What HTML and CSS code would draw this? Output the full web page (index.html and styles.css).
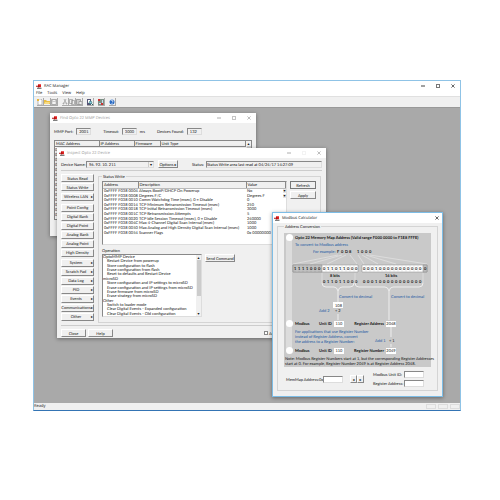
FILE: index.html
```html
<!DOCTYPE html>
<html lang="en">
<head>
    <meta charset="UTF-8">
    <meta name="viewport" content="width=device-width, initial-scale=1.0">
    <title>RAC Manager</title>
    <link rel="stylesheet" href="styles.css">
</head>
<body>
    <svg class="defs" width="0" height="0">
        <symbol id="logo" viewBox="0 0 12 9">
            <path d="M4 0h6v6H4z" fill="#e02020"/>
            <path d="M0 3h4V1l4 3-4 3V5H0z" fill="#b01010"/>
            <path d="M2 7h9v2H2z" fill="#555"/>
        </symbol>
        <symbol id="min" viewBox="0 0 5 5"><path d="M0 2.5h5" stroke="currentColor" fill="none"/></symbol>
        <symbol id="max" viewBox="0 0 5 5"><path d="M.5.5h4v4h-4z" stroke="currentColor" stroke-width=".8" fill="none"/></symbol>
        <symbol id="close" viewBox="0 0 5 5"><path d="M.5.5l4 4m0-4l-4 4" stroke="currentColor" stroke-width=".8" fill="none"/></symbol>
    </svg>

    <main class="app">
        <header class="titlebar">
            <svg class="logo"><use href="#logo"/></svg>
            <h1>RAC Manager</h1>
            <div class="controls">
                <button aria-label="Minimize"><svg><use href="#min"/></svg></button>
                <button aria-label="Maximize"><svg><use href="#max"/></svg></button>
                <button aria-label="Close"><svg><use href="#close"/></svg></button>
            </div>
        </header>
        <nav class="menu">
            <a href="#">File</a>
            <a href="#">Tools</a>
            <a href="#">View</a>
            <a href="#">Help</a>
        </nav>
        <div class="toolbar">
            <div class="tools">
                <button aria-label="New"><svg viewBox="0 0 6 6"><path d="M1 0h3l1 1v5H1z" fill="#fff" stroke="#777" stroke-width=".5"/><path d="M0 0h2v2H0z" fill="#e8b73a"/></svg></button>
                <button aria-label="Open"><svg viewBox="0 0 6 6"><path d="M0 1h2l1 1h3v3H0z" fill="#e9bd45"/><path d="M0 5l1-2h5L5 5z" fill="#f7dc84"/></svg></button>
                <button aria-label="Save"><svg viewBox="0 0 6 6"><path d="M.5.5h5v5h-5z" fill="#ccc" stroke="#888" stroke-width=".6"/><path d="M2 1h2v1H2zM1.500 3h3v2h-3z" fill="#f4f4f4"/></svg></button>
            </div>
            <div class="tools">
                <button aria-label="Cut"><svg viewBox="0 0 6 6"><path d="M2 0l2 4M4 0L2 4" stroke="#888" stroke-width=".6"/><path d="M1 4h1v1H1zM4 4h1v1H4z" fill="none" stroke="#888" stroke-width=".5"/></svg></button>
                <button aria-label="Copy"><svg viewBox="0 0 6 6"><path d="M.5.5h3v4h-3zM2.500 1.500h3v4h-3z" fill="#eee" stroke="#888" stroke-width=".6"/></svg></button>
                <button aria-label="Paste"><svg viewBox="0 0 6 6"><path d="M.5.5h4v5h-4z" fill="#ccc" stroke="#777" stroke-width=".6"/><path d="M3 2.500h3v3H3z" fill="#eee" stroke="#777" stroke-width=".5"/></svg></button>
            </div>
            <div class="tools">
                <button aria-label="Find"><svg viewBox="0 0 6 6"><path d="M0 0h4v6H0z" fill="#557"/><path d="M1 1h2v3H1z" fill="#fff"/><circle cx="3.500" cy="3.500" r="1.300" fill="#8cd0e4" stroke="#266" stroke-width=".6"/><path d="M4.500 4.500L6 6" stroke="#266"/></svg></button>
            </div>
            <div class="tools">
                <button aria-label="Inspect"><svg viewBox="0 0 6 6"><path d="M0 0h6v6H0z" fill="#7d9085"/><path d="M0 0h2v2H0zM3 4h2v2H3z" fill="#c33"/><path d="M4 1h1v3H4zM1 4h2v1H1z" fill="#cde"/></svg></button>
            </div>
            <div class="tools">
                <button aria-label="Help"><svg viewBox="0 0 6 6"><circle cx="3" cy="3" r="2.500" fill="#2b6cc4"/><path d="M2 2q0-1 1-1t1 1-1 1.300M3 4v1" stroke="#fff" stroke-width=".7" fill="none"/></svg></button>
            </div>
        </div>

        <div class="desktop">
            <section class="window find">
                <header class="titlebar inactive">
                    <svg class="logo"><use href="#logo"/></svg>
                    <h2>Find Opto 22 MMP Devices</h2>
                    <div class="controls">
                        <button aria-label="Minimize"><svg><use href="#min"/></svg></button>
                        <button aria-label="Maximize"><svg><use href="#max"/></svg></button>
                        <button aria-label="Close"><svg><use href="#close"/></svg></button>
                    </div>
                </header>
                <div class="find-fields">
                    <label>MMP Port: <input class="sunken" value="2001"></label>
                    <label>Timeout: <input class="sunken" value="3000"> <span>ms</span></label>
                    <label>Devices Found: <input class="sunken" value="132" readonly></label>
                </div>
                <div class="device-list">
                    <table>
                        <thead>
                            <tr><th class="mac">MAC Address</th><th class="ip">IP Address</th><th class="firmware">Firmware</th><th>Unit Type</th></tr>
                        </thead>
                        <tbody>
                            <tr><td>00-A0-3D-00-C0-14</td><td>10.192.55.81</td><td>R9.5a</td><td>SNAP-PAC-R1</td></tr>
                            <tr><td>00</td></tr>
                            <tr><td>00</td></tr>
                            <tr><td>00</td></tr>
                            <tr><td>00</td></tr>
                            <tr><td>00</td></tr>
                            <tr><td>00</td></tr>
                            <tr><td>00</td></tr>
                            <tr><td>00</td></tr>
                            <tr><td>00</td></tr>
                            <tr><td>00</td></tr>
                            <tr><td>00</td></tr>
                            <tr><td>00</td></tr>
                            <tr><td>00</td></tr>
                        </tbody>
                    </table>
                    <div class="scroll"><span>▴</span><i></i><span>▾</span></div>
                </div>
            </section>

            <section class="window inspect">
                <header class="titlebar inactive">
                    <svg class="logo"><use href="#logo"/></svg>
                    <h2>Inspect Opto 22 Device</h2>
                    <div class="controls">
                        <button aria-label="Minimize"><svg><use href="#min"/></svg></button>
                        <button aria-label="Maximize" disabled><svg><use href="#max"/></svg></button>
                        <button aria-label="Close"><svg><use href="#close"/></svg></button>
                    </div>
                </header>
                <div class="device-bar">
                    <label for="device">Device Name:</label>
                    <div class="combo sunken">
                        <select id="device"><option>96. 92. 10. 211</option></select>
                        <span>▾</span>
                    </div>
                    <button class="btn">Options <span>▸</span></button>
                    <label for="status" class="status-label">Status:</label>
                    <input id="status" class="sunken" value="Status Write area last read at 04/24/17 14:27:09" readonly>
                </div>
                <div class="inspect-body">
                    <div class="side">
                        <div class="side-group">
                            <button class="btn">Status Read</button>
                            <button class="btn">Status Write</button>
                        </div>
                        <div class="side-group">
                            <button class="btn more">Wireless LAN</button>
                        </div>
                        <div class="side-group">
                            <button class="btn">Point Config</button>
                            <button class="btn">Digital Bank</button>
                            <button class="btn">Digital Point</button>
                            <button class="btn">Analog Bank</button>
                            <button class="btn">Analog Point</button>
                            <button class="btn">High Density</button>
                        </div>
                        <div class="side-group">
                            <button class="btn more">System</button>
                            <button class="btn more">Scratch Pad</button>
                            <button class="btn more">Data Log</button>
                            <button class="btn more">PID</button>
                            <button class="btn more">Events</button>
                            <button class="btn more">Communications</button>
                            <button class="btn more">Other</button>
                        </div>
                    </div>
                    <fieldset class="write">
                        <legend>Status Write</legend>
                        <div class="write-row">
                            <div class="registers sunken">
                                <table>
                                    <thead>
                                        <tr><th class="address">Address</th><th class="description">Description</th><th>Value</th></tr>
                                    </thead>
                                    <tbody>
                                        <tr><td>0xFFFF F038 0004</td><td>Always BootP/DHCP On Powerup</td><td>No <span>▾</span></td></tr>
                                        <tr><td>0xFFFF F038 0008</td><td>Degrees F/C</td><td>Degrees F <span>▾</span></td></tr>
                                        <tr><td>0xFFFF F038 0010</td><td>Comm Watchdog Time (msec), 0 = Disable</td><td>0</td></tr>
                                        <tr><td>0xFFFF F038 0014</td><td>TCP Minimum Retransmission Timeout (msec)</td><td>250</td></tr>
                                        <tr><td>0xFFFF F038 0018</td><td>TCP Initial Retransmission Timeout (msec)</td><td>3000</td></tr>
                                        <tr><td>0xFFFF F038 001C</td><td>TCP Retransmission Attempts</td><td>5</td></tr>
                                        <tr><td>0xFFFF F038 0020</td><td>TCP Idle Session Timeout (msec), 0 = Disable</td><td>240000</td></tr>
                                        <tr><td>0xFFFF F038 004C</td><td>Max 4-Channel Digital Scan Interval (msec)</td><td>1000</td></tr>
                                        <tr><td>0xFFFF F038 0050</td><td>Max Analog and High Density Digital Scan Interval (msec)</td><td>1000</td></tr>
                                        <tr><td>0xFFFF F038 0054</td><td>Scanner Flags</td><td>0x 00000000</td></tr>
                                    </tbody>
                                </table>
                            </div>
                            <div class="actions">
                                <button class="btn default">Refresh</button>
                                <button class="btn">Apply</button>
                            </div>
                        </div>
                        <div class="operation">Operation</div>
                        <div class="operation-row">
                            <div class="operations sunken">
                                <ul>
                                    <li class="group">OptoMMP Device</li>
                                    <li>Restart Device from powerup</li>
                                    <li>Store configuration to flash</li>
                                    <li>Erase configuration from flash</li>
                                    <li>Reset to defaults and Restart Device</li>
                                    <li class="group">microSD</li>
                                    <li>Store configuration and IP settings to microSD</li>
                                    <li>Erase configuration and IP settings from microSD</li>
                                    <li>Erase firmware from microSD</li>
                                    <li>Erase strategy from microSD</li>
                                    <li class="group">Other</li>
                                    <li>Switch to loader mode</li>
                                    <li>Clear Digital Events - Expanded configuration</li>
                                    <li>Clear Digital Events - Old configuration</li>
                                </ul>
                                <div class="scroll"><span>▴</span><i></i><span>▾</span></div>
                            </div>
                            <button class="btn">Send Command</button>
                        </div>
                    </fieldset>
                </div>
                <footer class="inspect-footer">
                    <button class="btn">Close</button>
                    <button class="btn">Help</button>
                    <label class="auto"><input type="checkbox"> Auto Refresh</label>
                </footer>
            </section>

            <section class="window modbus">
                <header class="titlebar">
                    <svg class="logo"><use href="#logo"/></svg>
                    <h2>Modbus Calculator</h2>
                    <div class="controls">
                        <button aria-label="Close"><svg><use href="#close"/></svg></button>
                    </div>
                </header>
                <fieldset class="conversion">
                    <legend>Address Conversion</legend>
                    <div class="diagram">
                        <label class="choice map-choice">
                            <input type="radio" name="kind">
                            <span>Opto 22 Memory Map Address (Valid range F000 0000 to F1E8 FFFE)</span>
                        </label>
                        <svg class="bits" width="146" height="78" viewBox="0 0 146 78">
                            <g class="blue">
                                <text x="11" y="4">To convert to Modbus address</text>
                                <text x="29" y="11">For example:</text>
                                <text x="55" y="56">Convert to decimal</text>
                                <text x="107" y="56">Convert to decimal</text>
                                <text x="35" y="70">Add 2</text>
                            </g>
                            <text class="bold" y="11" x="53 57 61 65 73 77 81 85">F0D81000</text>
                            <path class="fan" d="M54 13L9 22M58 13L26 22M62 13L43 22M66 13L73 22M74 13L80 22M78 13L94 22M82 13L112 22M86 13L143 22"/>
                            <path d="M9 23h65v7H9zM78 23h65v7H78z" fill="#fff" stroke="#888" stroke-width=".5"/>
                            <path d="M9 23h29v7H9zM139 23h4v7h-4z" fill="#bdbdbd" stroke="#888" stroke-width=".5"/>
                            <path class="ticks" d="M13 23v7M17 23v7M21 23v7M25 23v7M29 23v7M33 23v7M42 23v7M46 23v7M50 23v7M54 23v7M58 23v7M62 23v7M66 23v7M70 23v7M82 23v7M86 23v7M90 23v7M94 23v7M98 23v7M102 23v7M106 23v7M110 23v7M114 23v7M118 23v7M122 23v7M126 23v7M130 23v7M134 23v7"/>
                            <text class="bold" y="28" x="10 14 18 22 26 30 34 39 43 47 51 55 59 63 67 71">1111000011011000</text>
                            <text class="bold" y="28" x="79 83 87 91 95 99 103 107 111 115 119 123 127 131 135 140">0001000000000000</text>
                            <text class="bold" x="46" y="35">8 bits</text>
                            <text class="bold" x="101" y="35">16 bits</text>
                            <text class="bold" y="41" x="39 43 47 51 55 59 63 67 71">011011000</text>
                            <text class="bold" y="41" x="79 83 87 91 95 99 103 107 111 115 119 123 127 131 135">000100000000000</text>
                            <g class="brace">
                                <path d="M38 41q0 4 4 4h8q3 0 4 4 1-4 4-4h8q4 0 4-4"/>
                                <path d="M71 41q0 4 4 4h26q3 0 4 4 1-4 4-4h26q4 0 4-4"/>
                                <path d="M38 31v10M71 31v10M139 31v10" stroke-width=".5"/>
                                <path d="M54 49v11M105 49v29M54 72v6"/>
                            </g>
                            <path d="M49 60h10v6H49z" fill="#fff"/>
                            <text x="51" y="65">108</text>
                            <text x="51" y="70">+ 2</text>
                        </svg>
                        <div class="choice">
                            <label class="kind"><input type="radio" name="kind"> <span>Modbus</span></label>
                            <label>Unit ID <input class="box" value="110"></label>
                            <label class="register">Register Address <input class="box" value="2048"></label>
                        </div>
                        <div class="note-row">
                            <p>For applications that use Register Number<br>instead of Register Address, convert<br>the address to a Register Number:</p>
                            <svg width="30" height="20" viewBox="0 0 30 20">
                                <path class="brace" d="M18 0v10M18 17v3"/>
                                <text class="blue" x="2" y="15">Add 1</text>
                                <text x="16" y="15">+ 1</text>
                            </svg>
                        </div>
                        <div class="choice">
                            <label class="kind"><input type="radio" name="kind"> <span>Modbus</span></label>
                            <label>Unit ID <input class="box" value="110"></label>
                            <label class="register">Register Number <input class="box" value="2049"></label>
                        </div>
                        <p class="note">Note: Modbus Register Numbers start at 1, but the corresponding Register Addresses<br>start at 0. For example, Register Number 2049 is at Register Address 2048.</p>
                    </div>
                    <div class="entry">
                        <label for="memmap">MemMap Address: <span>0x</span></label>
                        <input id="memmap" class="sunken">
                        <div class="arrows">
                            <button class="btn" aria-label="To memory map">◂</button>
                            <button class="btn" aria-label="To Modbus">▸</button>
                        </div>
                        <div class="entry-fields">
                            <label>Modbus Unit ID: <input class="sunken"></label>
                            <label>Register Address: <input class="sunken"></label>
                        </div>
                    </div>
                </fieldset>
            </section>
        </div>

        <footer class="statusbar">
            <span>Ready</span>
            <div class="panes"><i></i><i></i><i></i></div>
        </footer>
    </main>
</body>
</html>
```

FILE: styles.css
```css
* {
    box-sizing: border-box;
}

body {
    margin: 0;
    padding: 80px 39px 89px 33px;
    min-height: 100vh;
    display: flex;
    background-color: #fff;
    color: #111;
    font: 4px/5px Lato, "Liberation Sans", sans-serif;
    text-rendering: geometricPrecision;
}

h1, h2, p, ul {
    margin: 0;
    padding: 0;
    font: inherit;
}

button, input, select {
    margin: 0;
    padding: 0;
    border: 0;
    border-radius: 0;
    background: none;
    color: inherit;
    font: inherit;
    text-rendering: inherit;
    appearance: none;
}

a {
    color: inherit;
    text-decoration: none;
}

table {
    border-collapse: collapse;
    table-layout: fixed;
    width: 100%;
}

th, td {
    padding: 0 0 0 2px;
    font-weight: normal;
    text-align: left;
    white-space: nowrap;
}

label, legend, button {
    white-space: nowrap;
}

.defs {
    position: absolute;
}

.app {
    flex: 1;
    min-width: 0;
    display: flex;
    flex-direction: column;
    border: 1px solid #8fc3e6;
    border-bottom-color: #3474b4;
    background-color: #fff;
}

/* title bars */
.titlebar {
    display: flex;
    align-items: center;
    gap: 2px;
    height: 10px;
    padding: 0 5px 0 2px;
    background-color: #fff;
    font-family: "Open Sans", sans-serif;
}

.inactive {
    color: #999;
}

.logo {
    width: 6px;
    height: 5px;
}

.controls {
    margin-left: auto;
    display: flex;
    gap: 11px;
}

.controls button {
    display: flex;
}

.controls button:disabled {
    opacity: 0.2;
}

.controls svg {
    width: 4px;
    height: 4px;
}

.menu {
    display: flex;
    gap: 5px;
    height: 5px;
    padding-left: 2px;
    font-family: "Open Sans", sans-serif;
}

.toolbar {
    display: flex;
    gap: 4px;
    height: 11px;
    padding: 1px 3px;
    border-top: 1px solid #e0e0e0;
    background-color: #f0f0f0;
}

.tools {
    display: flex;
}

.tools button {
    display: flex;
    width: 7px;
    height: 8px;
    padding: 1px 0;
    border-right: 1px solid #aaa;
    border-bottom: 1px solid #aaa;
}

.tools svg {
    width: 6px;
    height: 6px;
}

.statusbar {
    display: flex;
    justify-content: space-between;
    height: 7px;
    padding: 1px 0;
    background-color: #f0f0f0;
    font-family: "Open Sans", sans-serif;
}

.panes {
    display: flex;
    gap: 2px;
}

.panes i {
    width: 10px;
    border: 1px solid #ddd;
}

/* windows on the desktop */
.desktop {
    flex: 1;
    position: relative;
    min-height: 296px;
    background-color: #a9a9a9;
    border-top: 1px solid #999;
}

.window {
    position: absolute;
    background-color: #f0f0f0;
    box-shadow: 0 1px 4px rgba(0, 0, 0, 0.4);
}

.find {
    left: 16px;
    top: 5px;
    width: 206px;
    height: 123px;
}

.inspect {
    left: 23px;
    top: 40px;
    width: 269px;
    height: 190px;
}

.modbus {
    left: 238px;
    top: 104px;
    width: 171px;
    height: 185px;
    border: 1px solid #7dbde6;
}

.modbus .titlebar {
    padding-left: 1px;
    padding-right: 3px;
}

/* shared controls */
.sunken {
    border: 1px solid #ddd;
    border-top-color: #888;
    border-left-color: #888;
}

.btn {
    height: 8px;
    border: 1px solid #fff;
    border-right-color: #888;
    border-bottom-color: #888;
    background-color: #f0f0f0;
    line-height: 5px;
    text-align: center;
}

.default {
    border-color: #777;
}

.scroll {
    width: 5px;
    display: flex;
    flex-direction: column;
    align-items: center;
    background-color: #f0f0f0;
}

.scroll i {
    width: 4px;
    height: 36px;
    margin-bottom: auto;
    background-color: #ccc;
}

/* find devices */
.find-fields {
    display: flex;
    gap: 12px;
    padding: 5px 4px 5px;
}

.find-fields label {
    display: flex;
    align-items: center;
    gap: 3px;
}

.find-fields input {
    width: 15px;
    height: 7px;
    padding-left: 2px;
}

.device-list {
    display: flex;
    height: 80px;
    margin: 0 4px;
    border: 1px solid #888;
    background-color: #fff;
    overflow: hidden;
}

.device-list table {
    flex: 1;
    align-self: flex-start;
}

.device-list th {
    border-right: 1px solid #888;
    border-bottom: 1px solid #888;
    background-color: #f0f0f0;
    padding-left: 1px;
}

.device-list td {
    padding-left: 0;
    overflow: hidden;
}

.mac {
    width: 44px;
}

.ip {
    width: 35px;
}

.firmware {
    width: 26px;
}

/* inspect device */
.device-bar {
    display: flex;
    align-items: center;
    height: 13px;
    margin: 0 4px 3px;
    border-bottom: 1px solid #ccc;
}

.device-bar label {
    width: 24px;
}

.combo {
    display: flex;
    width: 68px;
    height: 7px;
    margin: 0 4px 0 1px;
}

.combo select {
    flex: 1;
    padding-left: 2px;
}

.combo span {
    width: 5px;
    border-left: 1px solid #ccc;
    text-align: center;
}

.device-bar .btn {
    width: 20px;
}

.device-bar .status-label {
    width: 13px;
    margin-left: 14px;
}

.device-bar input {
    flex: 1;
    min-width: 0;
    height: 7px;
    margin-left: 1px;
}

.inspect-body {
    display: flex;
    gap: 4px;
    height: 149px;
    padding: 0 5px 0 4px;
}

.side {
    display: flex;
    flex-direction: column;
    justify-content: space-between;
    width: 33px;
    padding-bottom: 2px;
}

.side-group {
    display: flex;
    flex-direction: column;
    gap: 1px;
}

.more {
    display: flex;
    justify-content: center;
    padding-right: 3px;
    position: relative;
}

.more::after {
    content: "▸";
    position: absolute;
    right: 0;
}

.write, .conversion {
    min-width: 0;
    margin: 0;
    border: 1px solid #d4d4d4;
}

.write {
    flex: 1;
    padding: 2px 4px 0 3px;
}

.write legend, .conversion legend {
    padding: 0 1px;
}

.write-row, .operation-row {
    display: flex;
    gap: 3px;
}

.registers {
    flex: 1;
    height: 64px;
    background-color: #fff;
}

.registers table {
    height: 53px;
}

.registers th {
    height: 6px;
    background-color: #f0f0f0;
    border-right: 1px solid #888;
    border-bottom: 1px solid #bbb;
}

.registers th, .registers td {
    padding-left: 1px;
    line-height: 4px;
}

.registers td span {
    float: right;
    background-color: #e4e4e4;
}

.registers .address {
    width: 35px;
}

.registers .description {
    width: 108px;
}

.actions {
    display: flex;
    flex-direction: column;
    gap: 2px;
    width: 26px;
}

.operation {
    margin: 3px 0 1px;
}

.operations {
    display: flex;
    width: 100px;
    height: 63px;
    background-color: #fff;
}

.operations ul {
    flex: 1;
    display: grid;
    grid-auto-rows: 1fr;
    list-style: none;
    line-height: 4px;
    white-space: nowrap;
}

.operations li {
    padding-left: 4px;
}

.operations .group {
    padding-left: 0;
}

.operation-row .btn {
    width: 30px;
}

.inspect-footer {
    display: flex;
    gap: 2px;
    margin: 2px 4px 0;
    padding-top: 3px;
    border-top: 1px solid #ccc;
}

.inspect-footer .btn {
    width: 25px;
}

.auto {
    display: flex;
    align-items: center;
    gap: 1px;
    width: 58px;
    margin-left: auto;
}

.auto input {
    width: 4px;
    height: 4px;
    border: 1px solid #888;
    background-color: #fff;
}

/* modbus calculator */
.conversion {
    margin: 1px 4px 0;
    padding: 4px 6px 3px;
}

.diagram {
    background: linear-gradient(#dcdcdc, #dcdcdc) 2px 5px / 6px 112px no-repeat #c9c9c9;
    height: 134px;
}

.choice, .choice label {
    display: flex;
    align-items: center;
    gap: 2px;
}

.choice {
    height: 7px;
    padding-left: 2px;
    font-weight: bold;
}

.map-choice {
    height: 9px;
}

.choice input[type="radio"] {
    width: 7px;
    height: 7px;
    border-radius: 50%;
    background-color: #fff;
}

.choice .kind {
    width: 31px;
}

.choice .register {
    margin-left: auto;
    margin-right: 35px;
}

.box {
    width: 10px;
    height: 6px;
    background-color: #fff;
    font-weight: normal;
    text-align: center;
}

.bits {
    display: block;
}

.diagram text {
    font-size: 4px;
    fill: #111;
}

.diagram .bold {
    font-weight: bold;
}

.diagram .blue text, .diagram text.blue {
    fill: #1c5aa3;
}

.fan, .brace {
    fill: none;
    stroke: #eee;
}

.fan {
    stroke-width: 0.5;
}

.ticks {
    fill: none;
    stroke: #ccc;
    stroke-width: 0.5;
}

.note-row {
    display: flex;
    justify-content: space-between;
    height: 20px;
    padding: 0 28px 0 11px;
}

.note-row p {
    padding-top: 2px;
    color: #1c5aa3;
    white-space: nowrap;
}

.note {
    padding: 2px 0 0 1px;
    white-space: nowrap;
}

.entry {
    display: flex;
    align-items: center;
    padding: 4px 7px 0 2px;
}

.entry > label {
    display: flex;
    justify-content: space-between;
    width: 37px;
    padding-right: 1px;
}

.entry input {
    width: 20px;
    height: 7px;
    background-color: #fff;
}

.arrows {
    display: flex;
    margin-left: 7px;
}

.arrows .btn {
    width: 7px;
}

.entry-fields {
    margin-left: auto;
    display: flex;
    flex-direction: column;
    gap: 2px;
}

.entry-fields label {
    display: flex;
    align-items: center;
    justify-content: space-between;
    width: 51px;
}
```
